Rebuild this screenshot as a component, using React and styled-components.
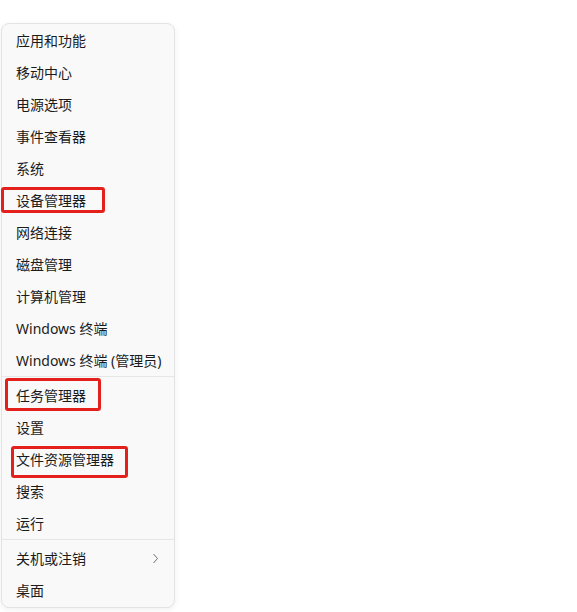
import styled, { createGlobalStyle } from "styled-components";

const GlobalStyle = createGlobalStyle`
  html, body {
    margin: 0;
    padding: 0;
    background: #ffffff;
  }
  body {
    font-family: "Segoe UI", "Noto Sans", "Noto Sans CJK SC", sans-serif;
    -webkit-font-smoothing: antialiased;
  }
`;

const Page = styled.div`
  padding: 23px 0 0 1px;
  width: 577px;
  height: 612px;
  box-sizing: border-box;
`;

const Menu = styled.div`
  width: 174px;
  box-sizing: border-box;
  background: #f9f9f9;
  border: 1px solid #e3e3e3;
  border-radius: 8px;
  box-shadow: 0 2px 6px rgba(0, 0, 0, 0.06);
  padding: 0 0 1px;
`;

const Group = styled.div`
  display: flex;
  flex-direction: column;
`;

const Separator = styled.div`
  height: 1px;
  background: #e6e6e6;
  margin: 0 0 2px;
`;

const Item = styled.div`
  position: relative;
  height: 32px;
  display: flex;
  align-items: center;
  justify-content: space-between;
  padding: 0 15px 0 14px;
  font-size: 14px;
  color: #1b1b1b;
  white-space: nowrap;
`;

const Highlight = styled.span`
  position: absolute;
  left: ${(p) => p.$left}px;
  top: ${(p) => p.$top}px;
  width: ${(p) => p.$w}px;
  height: ${(p) => p.$h}px;
  box-sizing: border-box;
  border: 3px solid #e3201b;
  border-radius: 3px;
  pointer-events: none;
`;

const Chevron = () => (
  <svg width="7" height="11" viewBox="0 0 7 11" fill="none">
    <path d="M1.5 1 L5.5 5.5 L1.5 10" stroke="#707070" strokeWidth="1" />
  </svg>
);

const groups = [
  [
    { label: "应用和功能" },
    { label: "移动中心" },
    { label: "电源选项" },
    { label: "事件查看器" },
    { label: "系统" },
    { label: "设备管理器", box: { left: -1, top: 3, w: 104, h: 26 } },
    { label: "网络连接" },
    { label: "磁盘管理" },
    { label: "计算机管理" },
    { label: "Windows 终端" },
    { label: "Windows 终端 (管理员)" },
  ],
  [
    { label: "任务管理器", box: { left: 3, top: -1, w: 96, h: 33 } },
    { label: "设置" },
    { label: "文件资源管理器", box: { left: 9, top: 3, w: 117, h: 32 } },
    { label: "搜索" },
    { label: "运行" },
  ],
  [{ label: "关机或注销", sub: true }, { label: "桌面" }],
];

export default function App() {
  return (
    <>
      <GlobalStyle />
      <Page>
        <Menu>
          {groups.map((items, gi) => (
            <div key={gi}>
              {gi > 0 && <Separator />}
              <Group>
                {items.map((it) => (
                  <Item key={it.label}>
                    <span>{it.label}</span>
                    {it.sub && <Chevron />}
                    {it.box && (
                      <Highlight
                        $left={it.box.left}
                        $top={it.box.top}
                        $w={it.box.w}
                        $h={it.box.h}
                      />
                    )}
                  </Item>
                ))}
              </Group>
            </div>
          ))}
        </Menu>
      </Page>
    </>
  );
}
